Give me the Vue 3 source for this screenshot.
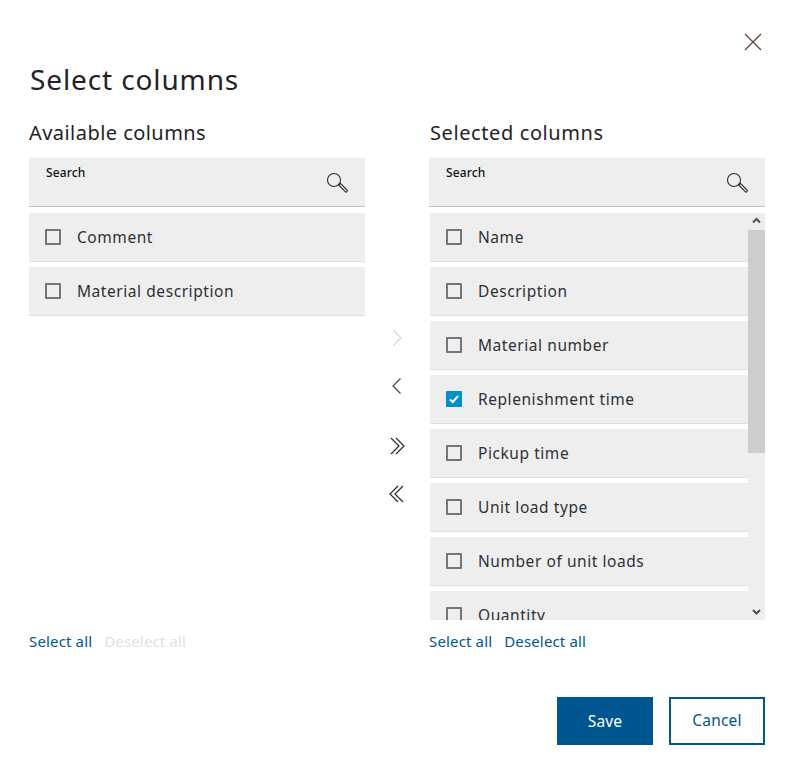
<template>
  <div class="dialog">
    <div class="close-row">
      <button class="icon-btn close">
        <svg width="18" height="18" viewBox="0 0 18 18"><path d="M1 1l16 16M17 1L1 17" class="line" /></svg>
      </button>
    </div>
    <h1 class="title">Select columns</h1>

    <div class="columns">
      <section class="col">
        <h2 class="col-title">Available columns</h2>
        <div class="search">
          <span class="search-label">Search</span>
          <svg class="search-icon" width="24" height="24" viewBox="0 0 24 24">
            <circle cx="9" cy="9" r="6.5" class="lens" />
            <path d="M13.5 14l2-1.5 6.5 6.5c.6.6.5 1.200 0 1.700s-1.100.6-1.700 0z" class="lens" />
          </svg>
        </div>
        <div class="list-wrap">
          <ul class="list">
            <li v-for="item in available" :key="item" class="item">
              <span class="check"></span>
              <span>{{ item }}</span>
            </li>
          </ul>
        </div>
        <div class="links">
          <a class="link">Select all</a>
          <a class="link disabled">Deselect all</a>
        </div>
      </section>

      <div class="moves">
        <button class="icon-btn move">
          <svg width="16" height="20" viewBox="0 0 16 20"><path d="M4.500 2.500l7.500 7.500-7.500 7.500" class="line off" /></svg>
        </button>
        <button class="icon-btn move">
          <svg width="16" height="20" viewBox="0 0 16 20"><path d="M11.500 2.500L4 10l7.500 7.500" class="line" /></svg>
        </button>
        <button class="icon-btn move gap">
          <svg width="16" height="20" viewBox="0 0 16 20"><path d="M2 2l8 8-8 8M7 2l8 8-8 8" class="line dark" /></svg>
        </button>
        <button class="icon-btn move">
          <svg width="16" height="20" viewBox="0 0 16 20"><path d="M14 2l-8 8 8 8M9 2l-8 8 8 8" class="line dark" /></svg>
        </button>
      </div>

      <section class="col">
        <h2 class="col-title shifted">Selected columns</h2>
        <div class="search">
          <span class="search-label">Search</span>
          <svg class="search-icon" width="24" height="24" viewBox="0 0 24 24">
            <circle cx="9" cy="9" r="6.5" class="lens" />
            <path d="M13.5 14l2-1.5 6.500 6.500c.6.6.5 1.200 0 1.700s-1.100.6-1.700 0z" class="lens" />
          </svg>
        </div>
        <div class="list-wrap scrolled">
          <ul class="list">
            <li v-for="item in selected" :key="item.name" class="item">
              <span class="check" :class="{ on: item.checked }">
                <svg v-if="item.checked" width="12" height="12" viewBox="0 0 12 12"><path d="M2 6.500l2.800 2.500L10 3" class="tick" /></svg>
              </span>
              <span>{{ item.name }}</span>
            </li>
          </ul>
          <div class="scrollbar">
            <svg class="arrow" width="17" height="17" viewBox="0 0 17 17"><path d="M5 9.500l3.500-3.500 3.500 3.500" class="arrow-line" /></svg>
            <div class="thumb"></div>
            <svg class="arrow bottom" width="17" height="17" viewBox="0 0 17 17"><path d="M5 7l3.500 3.500L12 7" class="arrow-line" /></svg>
          </div>
        </div>
        <div class="links">
          <a class="link">Select all</a>
          <a class="link">Deselect all</a>
        </div>
      </section>
    </div>

    <div class="footer">
      <button class="btn primary">Save</button>
      <button class="btn secondary">Cancel</button>
    </div>
  </div>
</template>

<script setup>
const available = ['Comment', 'Material description']

const selected = [
  { name: 'Name' },
  { name: 'Description' },
  { name: 'Material number' },
  { name: 'Replenishment time', checked: true },
  { name: 'Pickup time' },
  { name: 'Unit load type' },
  { name: 'Number of unit loads' },
  { name: 'Quantity' }
]
</script>

<style scoped>
.dialog {
  width: 792px;
  height: 773px;
  box-sizing: border-box;
  padding: 33px 27px 0 29px;
  background: #fff;
  font-family: "Noto Sans", "Open Sans", sans-serif;
  color: #1f2226;
}

.close-row {
  display: flex;
  justify-content: flex-end;
  height: 18px;
}

.icon-btn {
  padding: 0;
  border: 0;
  background: none;
  display: flex;
  align-items: center;
  justify-content: center;
}

.close {
  margin-right: 3px;
  width: 18px;
  height: 18px;
}

.line {
  fill: none;
  stroke: #5a4436;
  stroke-width: 1.2;
}

.line.off {
  stroke: #d6d6d6;
}

.line.dark {
  stroke: #2a2a33;
}

.title {
  margin: 10px 0 0 1px;
  font-size: 28px;
  line-height: 36px;
  font-weight: 400;
  letter-spacing: 0.88px;
}

.columns {
  display: grid;
  grid-template-columns: 336px 64px 336px;
  margin-top: 23px;
}

.col-title {
  margin: 0;
  font-size: 20px;
  line-height: 26px;
  font-weight: 400;
  letter-spacing: 0.45px;
}

.col-title.shifted {
  margin-left: 1px;
  letter-spacing: 0.6px;
}

.search {
  position: relative;
  height: 49px;
  box-sizing: border-box;
  margin-top: 12px;
  padding: 7px 17px;
  background: #eeeeee;
  border-bottom: 1px solid #bfc0c2;
}

.search-label {
  display: block;
  font-size: 12px;
  line-height: 16px;
  font-weight: 500;
  letter-spacing: 0.15px;
  color: #111;
}

.search-icon {
  position: absolute;
  top: 13px;
  right: 16px;
}

.lens {
  fill: none;
  stroke: #2a2d30;
  stroke-width: 1.1;
}

.list-wrap {
  display: flex;
  height: 407px;
  margin-top: 6px;
  overflow: hidden;
}

.list {
  flex: 1;
  min-width: 0;
  margin: 0;
  padding: 0;
  list-style: none;
}

.item {
  display: flex;
  align-items: center;
  gap: 16px;
  height: 49px;
  box-sizing: border-box;
  margin-bottom: 5px;
  padding-left: 16px;
  background: #eeeeee;
  border-bottom: 1px solid #dfdfe0;
  font-size: 15.5px;
  letter-spacing: 0.56px;
  color: #2e3236;
}

.scrolled .item {
  margin-left: 1px;
}

.check {
  flex: none;
  display: flex;
  align-items: center;
  justify-content: center;
  width: 16px;
  height: 16px;
  box-sizing: border-box;
  border: 2px solid #71767c;
  border-radius: 1px;
}

.check.on {
  border-color: #008ecf;
  background: #008ecf;
}

.tick {
  fill: none;
  stroke: #fff;
  stroke-width: 2;
}

.scrollbar {
  position: relative;
  flex: none;
  width: 17px;
  background: #eeeeee;
  padding-top: 17px;
  box-sizing: border-box;
}

.arrow {
  position: absolute;
  top: 0;
  left: 0;
}

.arrow.bottom {
  top: auto;
  bottom: 0;
}

.arrow-line {
  fill: none;
  stroke: #505050;
  stroke-width: 2;
}

.thumb {
  height: 223px;
  background: #cdcdcd;
}

.links {
  display: flex;
  gap: 12px;
  margin-top: 12px;
  font-size: 15px;
  line-height: 19px;
  letter-spacing: 0.15px;
}

.link {
  color: #005691;
}

.link.disabled {
  color: #dfdfe0;
}

.moves {
  display: flex;
  flex-direction: column;
  align-items: center;
  padding-top: 194px;
}

.move {
  width: 32px;
  height: 48px;
}

.move.gap {
  margin-top: 12px;
}

.footer {
  display: flex;
  justify-content: flex-end;
  gap: 16px;
  margin-top: 46px;
}

.btn {
  width: 96px;
  height: 48px;
  box-sizing: border-box;
  font-family: inherit;
  font-size: 15.5px;
  letter-spacing: 0.2px;
}

.primary {
  border: 0;
  background: #005691;
  color: #fff;
}

.secondary {
  border: 2px solid #005691;
  padding-bottom: 4px;
  background: #fff;
  color: #005691;
}
</style>

<style>
html,
body {
  margin: 0;
  background: #fff;
}
</style>
